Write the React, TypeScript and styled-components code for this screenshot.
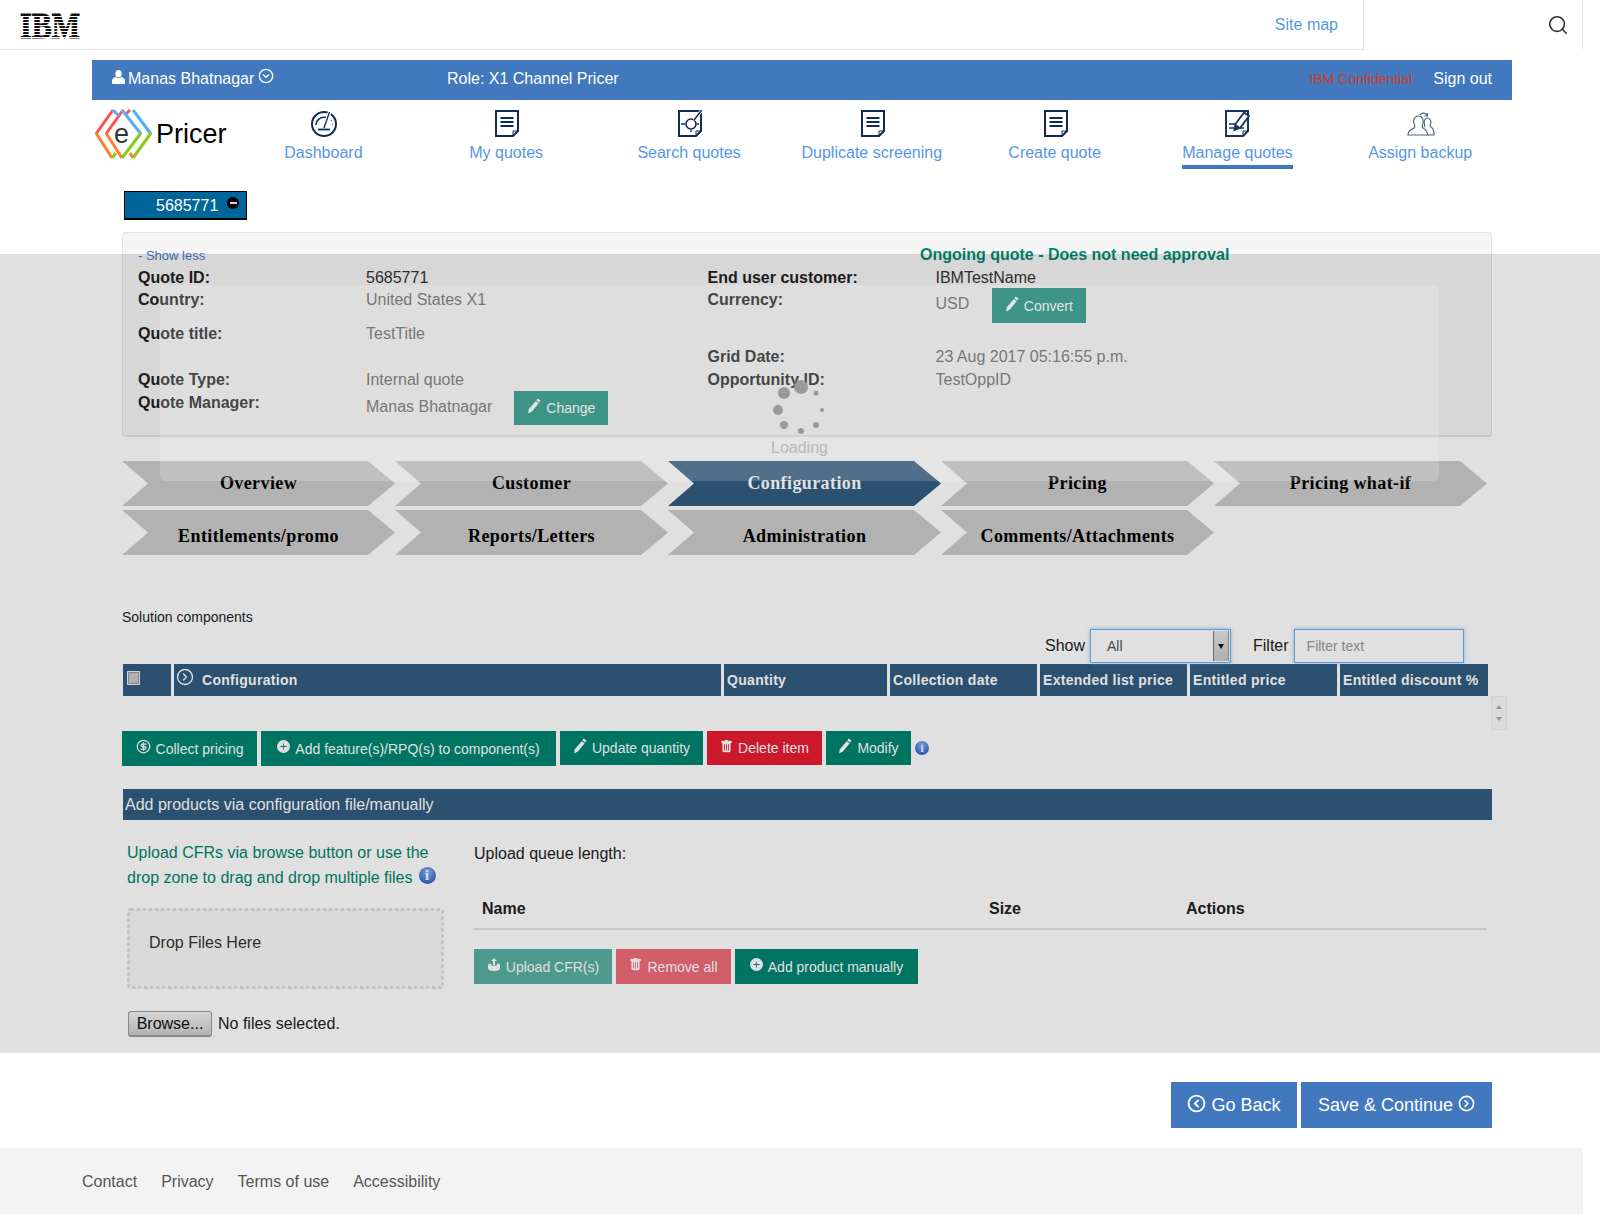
import React from "react";
import styled, { createGlobalStyle } from "styled-components";
import { BsPlusCircleFill, BsTrashFill } from "react-icons/bs";
import { CircleChevronDown, CircleChevronLeft, CircleChevronRight, CircleDollarSign, Search } from "lucide-react";

const GlobalStyle = createGlobalStyle`
  html, body { margin: 0; padding: 0; background: #fff; }
  body { font-family: "Liberation Sans", Arial, sans-serif; font-size: 16px; color: #222; overflow: hidden; }
  * { box-sizing: border-box; }
`;

const navy = "#0f2a55";

const DocBase = () => (
  <>
    <path d="M1 1h22v20l-5 5H1z" fill="none" stroke={navy} strokeWidth="2" />
    <path d="M23 21h-5v5" fill="none" stroke={navy} strokeWidth="1" />
  </>
);

const DocLines = () => (
  <svg width="24" height="27" viewBox="0 0 24 27">
    <DocBase />
    <path d="M5.5 8h13M5.5 12h13M5.5 16h13" stroke={navy} strokeWidth="1.8" />
  </svg>
);

const GaugeIcon = () => (
  <svg width="28" height="27" viewBox="0 0 28 27">
    <circle cx="14" cy="14" r="12" fill="none" stroke={navy} strokeWidth="2" />
    <path d="M6 15a8 8 0 0 1 10-7.5" fill="none" stroke={navy} strokeWidth="1.5" />
    <path d="M14 18L20 1" stroke="#fff" strokeWidth="3.5" />
    <path d="M14 18L19.5 2" stroke={navy} strokeWidth="1.3" />
    <path d="M8 19.5h12" stroke={navy} strokeWidth="1.8" />
    <path d="M21 10l.5 .8M22 14h.8" stroke={navy} strokeWidth="1.2" />
  </svg>
);

const SearchDocIcon = () => (
  <svg width="24" height="27" viewBox="0 0 24 27">
    <DocBase />
    <circle cx="13" cy="14" r="5" fill="#fff" stroke={navy} strokeWidth="1.6" />
    <path d="M16 10L23 1" stroke="#fff" strokeWidth="3" />
    <path d="M16 10L23 1" stroke={navy} strokeWidth="1.5" />
    <path d="M3 14h4M19 14h2M13 20v2" stroke={navy} strokeWidth="1.3" />
  </svg>
);

const ManageIcon = () => (
  <svg width="26" height="27" viewBox="0 0 26 27">
    <path d="M1 1h22v20l-5 5H1z" fill="none" stroke="#17345f" strokeWidth="2" />
    <path d="M23 21h-5v5" fill="none" stroke="#17345f" strokeWidth="1" />
    <path d="M4 14h6M4 18h15" stroke="#17345f" strokeWidth="1.3" />
    <path d="M9.500 20l1-6L19 2.500l5 3.500-8.500 11.500z" fill="#fff" stroke="#17345f" strokeWidth="1.800" />
    <path d="M9.500 20l1-6 5 3.500z" fill="#17345f" />
  </svg>
);

const BackupIcon = () => (
  <svg width="28" height="26" viewBox="0 0 28 26">
    <g fill="none" stroke="#53657f" strokeWidth="1.200">
      <path d="M1 24c0-4 2-5 6-7 1-1 1-2 .5-3-2-3-1-9 4-9 4 0 6 5 4 9-.5 1-.5 2 .5 3 3 1.500 4 3 5 7z" />
      <path d="M17 16c1-1 1-2 .5-3-1-2 0-6 3-6s4 4 3 6c-.5 1-.5 2 .5 3 2 1 3 3 3 8h-6" />
      <path d="M13 4c1-2 4-2.500 6-1l1 1.500M20.500 2v3h-3" />
    </g>
  </svg>
);

const UserGlyph = () => (
  <svg width="13" height="14" viewBox="0 0 13 14" fill="#fff">
    <ellipse cx="6.500" cy="3.800" rx="3.200" ry="3.800" />
    <path d="M0 13v-2.500C0 8.500 2 7.500 3.500 7c1.500 1.500 4.500 1.500 6 0 1.500.5 3.500 1.500 3.500 3.500V13c0 .5-.5 1-1 1H1c-.5 0-1-.5-1-1z" />
  </svg>
);

const PencilGlyph = () => (
  <svg width="14" height="16" viewBox="0 0 14 16" fill="#fff">
    <path d="M10.500 .5l3 2-1.200 1.900-3-2z" />
    <path d="M8.700 3.200l3 2-6.800 8.300L1 15.500l.8-4.200z" />
  </svg>
);

const Page = styled.div`
  position: relative;
  width: 1600px;
  height: 1214px;
  overflow: hidden;
`;

const Frame = styled.div`
  width: 1583px;
`;

const Header = styled.header`
  display: flex;
  height: 50px;
`;

const HeaderMain = styled.div`
  flex: 1;
  display: flex;
  align-items: center;
  justify-content: space-between;
  padding: 1px 25px 0 20px;
  border-bottom: 1px solid #e3e3e3;
  border-right: 1px solid #e3e3e3;
`;

const LogoMark = styled.svg`
  align-self: flex-start;
  margin-top: 1px;
`;

const SiteMap = styled.a`
  color: #5596e6;
  font-size: 16px;
`;

const SearchBox = styled.div`
  width: 219px;
  height: 49px;
  display: flex;
  align-items: center;
  justify-content: flex-end;
  padding: 1px 13px 0 0;
  border-right: 1px solid #e3e3e3;
  color: #333;
`;

const UserBar = styled.div`
  display: flex;
  align-items: center;
  width: 1420px;
  height: 40px;
  margin: 10px 0 0 92px;
  padding: 0 20px 3px;
  background: #4178be;
  color: #fff;
`;

const UserName = styled.div`
  display: flex;
  align-items: center;
  gap: 3px;
  width: 335px;
  svg:first-child { margin-top: -4px; }
  svg:last-child { margin: -5px 0 0 1px; }
`;

const Confidential = styled.span`
  margin: 1px 21px 0 auto;
  font-size: 14px;
  color: #c8402a;
`;

const NavRow = styled.div`
  display: flex;
  height: 91px;
  margin-left: 92px;
`;

const LogoBox = styled.div`
  width: 140px;
  padding: 9px 0 0 3px;
`;

const Nav = styled.nav`
  display: grid;
  grid-template-columns: repeat(7, 182.8px);
  align-content: start;
`;

const NavItem = styled.a<{ $active?: boolean }>`
  display: flex;
  flex-direction: column;
  align-items: center;
  color: #5596e6;
  font-size: 16px;
  line-height: 18px;
  height: 70px;
  padding-top: 9px;
  span {
    margin-top: 7px;
    padding-bottom: 3px;
    border-bottom: 4px solid ${(p) => (p.$active ? "#4178be" : "transparent")};
  }
`;

const NavGlyph = styled.div`
  height: 28px;
  padding-left: 2px;
  display: flex;
  align-items: flex-end;
  justify-content: center;
`;

const Chip = styled.div`
  display: flex;
  align-items: center;
  width: 123px;
  height: 29px;
  margin-left: 124px;
  padding: 1px 0 0 31px;
  background: #006699;
  border: 1px solid #000;
  border-bottom-width: 2px;
  color: #fff;
  font-size: 16px;
`;

const ChipDot = styled.span`
  width: 12px;
  height: 12px;
  margin: -6px 0 0 9px;
  border-radius: 50%;
  background: #000;
  display: flex;
  align-items: center;
  justify-content: center;
  &::after { content: ""; width: 7px; height: 2px; background: #cfd8dc; }
`;

const Content = styled.main`
  width: 1370px;
  margin-left: 122px;
`;

const Panel = styled.section`
  height: 205px;
  margin-top: 12px;
  padding: 12px 15px 0;
  background: #f5f5f5;
  border: 1px solid #e3e3e3;
  border-bottom-width: 2px;
  border-radius: 4px;
`;

const PanelTop = styled.div`
  display: grid;
  grid-template-columns: 782px 1fr;
  height: 22px;
`;

const ShowLess = styled.a`
  font-size: 13px;
  line-height: 21px;
  color: #4178be;
`;

const Status = styled.span`
  font-size: 16px;
  line-height: 20px;
  font-weight: 700;
  color: #008571;
`;

const PanelColumns = styled.div`
  display: grid;
  grid-template-columns: 569.5px 1fr;
`;

const Field = styled.div<{ $h: number }>`
  display: grid;
  grid-template-columns: 228px 1fr;
  height: ${(p) => p.$h}px;
  line-height: 22px;
`;

const Label = styled.span`
  font-weight: 700;
  color: #222;
`;

const Value = styled.span<{ $strong?: boolean }>`
  color: ${(p) => (p.$strong ? "#333" : "#666")};
`;

const ValueRow = styled.div<{ $gap: number }>`
  display: flex;
  align-items: flex-start;
  gap: ${(p) => p.$gap}px;
  margin-top: -1px;
  color: #666;
  & > span { margin-top: 5px; }
`;

const Button = styled.button<{ $tone?: "green" | "red" | "blue"; $faded?: number; $w?: number; $h?: number }>`
  display: inline-flex;
  align-items: center;
  justify-content: center;
  gap: 5px;
  width: ${(p) => (p.$w ? `${p.$w}px` : "auto")};
  height: ${(p) => p.$h || 35}px;
  padding: 0;
  border: 0;
  font-family: inherit;
  font-size: 14px;
  color: #fff;
  white-space: nowrap;
  opacity: ${(p) => p.$faded || 1};
  background: ${(p) => (p.$tone === "red" ? "#e71d32" : p.$tone === "blue" ? "#4178be" : "#008571")};
  svg { margin-top: -4px; flex: none; }
`;

const Steps = styled.div`
  display: grid;
  grid-template-columns: repeat(5, 273px);
  grid-auto-rows: 45px;
  gap: 4px 0;
  margin-top: 24px;
`;

const Step = styled.div<{ $active?: boolean }>`
  display: flex;
  align-items: center;
  justify-content: center;
  clip-path: polygon(0 0, 246px 0, 100% 50%, 246px 100%, 0 100%, 26px 50%);
  background: ${(p) => (p.$active ? "#325c80" : "#cbcbcb")};
  color: ${(p) => (p.$active ? "#fff" : "#000")};
  font-family: "Liberation Serif", "Times New Roman", serif;
  font-size: 18px;
  font-weight: 700;
  letter-spacing: 0.4px;
  &:nth-child(n + 6) { padding-top: 7px; }
`;

const SectionTitle = styled.div`
  margin-top: 52px;
  font-size: 14px;
  line-height: 20px;
`;

const TableControls = styled.div`
  display: flex;
  align-items: center;
  height: 34px;
  margin: 2px 0 1px;
  padding-left: 923px;
`;

const ControlLabel = styled.span`
  margin-right: 5px;
`;

const SelectBox = styled.div`
  position: relative;
  display: flex;
  align-items: center;
  width: 141px;
  height: 34px;
  margin-right: 22px;
  padding-left: 16px;
  font-size: 14px;
  color: #555;
  border: 1px solid #68b0f2;
  box-shadow: 0 0 4px rgba(104, 176, 242, 0.7);
`;

const SelectArrow = styled.span`
  position: absolute;
  top: 1px;
  right: 1px;
  bottom: 1px;
  width: 16px;
  display: flex;
  align-items: center;
  justify-content: center;
  background: linear-gradient(#e4e4e4, #c8c8c8);
  border-left: 1px solid #777;
  border-right: 1px solid #999;
  &::after {
    content: "";
    border: 3px solid transparent;
    border-top: 5px solid #111;
    margin-top: 4px;
  }
`;

const FilterInput = styled.input`
  width: 170px;
  height: 34px;
  padding: 0 12px;
  font-family: inherit;
  font-size: 14px;
  background: transparent;
  border: 1px solid #68b0f2;
  box-shadow: 0 0 4px rgba(104, 176, 242, 0.7);
  &::placeholder { color: #999; opacity: 1; }
`;

const TableHead = styled.div`
  display: grid;
  grid-template-columns: 48px 547px 163px 147px 147px 147px 148px;
  gap: 3px;
  height: 32px;
  margin-left: 1px;
`;

const HeadCell = styled.div`
  display: flex;
  align-items: center;
  padding-left: 3px;
  background: #325c80;
  color: #fff;
  font-size: 14px;
  font-weight: 700;
  letter-spacing: 0.3px;
  white-space: nowrap;
`;

const ConfigCell = styled(HeadCell)`
  padding-left: 2px;
  svg { margin: -6px 8px 0 0; }
`;

const CheckBox = styled.span`
  width: 13px;
  height: 14px;
  margin: -4px 0 0 1px;
  background: #c9c9c9;
  border: 1px solid #eee;
  box-shadow: inset 0 0 0 1px #999;
`;

const TableBody = styled.div`
  display: flex;
  justify-content: flex-end;
  height: 35px;
  margin-right: -15px;
`;

const ScrollBar = styled.div`
  display: flex;
  flex-direction: column;
  align-items: center;
  justify-content: space-around;
  width: 16px;
  height: 34px;
  padding: 4px 0;
  background: #fafafa;
  border: 1px solid #f0f0f0;
`;

const ScrollArrow = styled.span<{ $up?: boolean }>`
  border: 3px solid transparent;
  ${(p) => (p.$up ? "border-bottom: 4px solid #aaa; margin-top: -3px;" : "border-top: 4px solid #aaa; margin-bottom: -3px;")}
`;

const ActionRow = styled.div`
  display: flex;
  align-items: flex-start;
  gap: 4px;
`;

const InfoDot = styled.span<{ $size: number }>`
  display: inline-flex;
  align-items: center;
  justify-content: center;
  width: ${(p) => p.$size}px;
  height: ${(p) => p.$size}px;
  border-radius: 50%;
  background: radial-gradient(circle at 50% 30%, #8fb8f5, #3366cc 75%);
  color: #fff;
  font-family: "Liberation Serif", serif;
  font-size: ${(p) => p.$size - 3}px;
  font-weight: 700;
`;

const ActionInfo = styled(InfoDot)`
  margin: 10px 0 0;
`;

const Band = styled.div`
  height: 31px;
  margin: 23px 0 0 1px;
  padding-left: 2px;
  line-height: 31px;
  background: #325c80;
  color: #fff;
  font-size: 16px;
`;

const UploadGrid = styled.div`
  display: grid;
  grid-template-columns: 352px 1fr;
  margin-top: 21px;
`;

const UploadLeft = styled.div`
  padding-left: 5px;
`;

const UploadHint = styled.p`
  margin: 0;
  width: 316px;
  line-height: 24.5px;
  color: #008571;
  white-space: nowrap;
`;

const HintInfo = styled(InfoDot)`
  margin: 0 0 0 6px;
  vertical-align: 3px;
`;

const DropZone = styled.div`
  width: 317px;
  height: 81px;
  margin-top: 18px;
  padding: 21px 19px;
  line-height: 22px;
  background: #f8f8f8;
  border: 3px dotted #dcdcdc;
  border-radius: 4px;
  color: #333;
`;

const FileRow = styled.div`
  display: flex;
  align-items: center;
  gap: 6px;
  margin-top: 22px;
  padding-left: 1px;
`;

const Browse = styled.button`
  width: 84px;
  height: 26px;
  padding: 0;
  font-family: inherit;
  font-size: 16px;
  color: #111;
  background: linear-gradient(#f4f4f4, #cccccc);
  border: 1px solid #9c9c9c;
  border-bottom-width: 2px;
  border-radius: 3px;
`;

const QueueTitle = styled.div`
  line-height: 25px;
`;

const QueueHead = styled.div`
  display: grid;
  grid-template-columns: 507px 197px 1fr;
  height: 42px;
  margin-top: 22px;
  padding: 10px 0 0 8px;
  width: 1013px;
  border-bottom: 2px solid #e3e3e3;
  font-weight: 700;
  line-height: 22px;
`;

const QueueActions = styled.div`
  display: flex;
  gap: 4px;
  margin-top: 19px;
`;

const Bottom = styled.div`
  display: flex;
  justify-content: flex-end;
  gap: 4px;
  height: 111px;
  padding: 45px 91px 0 0;
`;

const BigButton = styled(Button)`
  height: 46px;
  font-size: 18px;
  svg { margin-top: -4px; }
`;

const Footer = styled.footer`
  display: flex;
  gap: 24px;
  height: 67px;
  padding: 25px 0 0 82px;
  background: #f3f3f3;
  color: #555;
  line-height: 18px;
`;

const Overlay = styled.div`
  position: absolute;
  top: 254px;
  left: 0;
  width: 100%;
  height: 799px;
  background: rgba(0, 0, 0, 0.12);
`;

const LoadingBox = styled.div`
  position: absolute;
  top: 31px;
  left: 160px;
  width: 1279px;
  height: 196px;
  padding-top: 94px;
  display: flex;
  flex-direction: column;
  align-items: center;
  background: rgba(255, 255, 255, 0.18);
  border-radius: 5px;
  color: #b8b8b8;
  line-height: 18px;
`;

const steps = [
  "Overview",
  "Customer",
  "Configuration",
  "Pricing",
  "Pricing what-if",
  "Entitlements/promo",
  "Reports/Letters",
  "Administration",
  "Comments/Attachments",
];

const navItems = [
  { label: "Dashboard", icon: <GaugeIcon /> },
  { label: "My quotes", icon: <DocLines /> },
  { label: "Search quotes", icon: <SearchDocIcon /> },
  { label: "Duplicate screening", icon: <DocLines /> },
  { label: "Create quote", icon: <DocLines /> },
  { label: "Manage quotes", icon: <ManageIcon />, active: true },
  { label: "Assign backup", icon: <BackupIcon /> },
];

const columns = ["Quantity", "Collection date", "Extended list price", "Entitled price", "Entitled discount %"];

const spinnerDots = [
  [31, 8, 7],
  [14, 14, 6],
  [8, 31, 5],
  [14, 46, 4],
  [31, 52, 3],
  [46, 46, 3],
  [52, 31, 2],
  [46, 14, 2.5],
];

const Logo = () => (
  <svg width="135" height="52" viewBox="0 0 135 52">
    <g fill="none" strokeWidth="3">
      <path d="M1 25L18 1M11 25L28 1M31 5L35 1" stroke="#ff5050" />
      <path d="M18 1L24 7M27 1L46 25M38 1L56 25" stroke="#5aaef5" />
      <path d="M1 24L17 49M11 24L27 49M35 44L38 49" stroke="#ff7f2e" />
      <path d="M17 49L21 44M27 49L46 24M38 49L56 24" stroke="#8ccc10" />
    </g>
    <text x="19" y="34" fontFamily="Liberation Sans" fontSize="27" fill="#333">e</text>
    <text x="61" y="34" fontFamily="Liberation Sans" fontSize="27" fill="#000">Pricer</text>
  </svg>
);

const IbmLogo = () => (
  <LogoMark width="62" height="46" viewBox="0 0 62 46">
    <text transform="scale(1 1.2)" x="0" y="30" fontFamily="Liberation Serif" fontSize="30" fontWeight="700" fill="#111" stroke="#111" strokeWidth="0.8">IBM</text>
    {[14, 17, 20, 23, 26, 29, 32, 35].map((y) => (
      <rect key={y} x="0" y={y} width="62" height="1" fill="#fff" />
    ))}
  </LogoMark>
);

const UploadGlyph = () => (
  <svg width="14" height="14" viewBox="0 0 14 14" fill="#fff">
    <path d="M7 0l3 3H8v4H6V3H4z" />
    <path d="M1 7c0-1 1-1.500 3-1.500V7c0 1 6 1 6 0V5.500c2 0 3 .5 3 1.500v3c0 2-2 3-6 3s-6-1-6-3z" />
  </svg>
);

export default function App() {
  return (
    <Page>
      <GlobalStyle />
      <Frame>
        <Header>
          <HeaderMain>
            <IbmLogo />
            <SiteMap>Site map</SiteMap>
          </HeaderMain>
          <SearchBox>
            <Search size={22} strokeWidth={1.800} />
          </SearchBox>
        </Header>

        <UserBar>
          <UserName>
            <UserGlyph />
            Manas Bhatnagar
            <CircleChevronDown size={16} />
          </UserName>
          <span>Role: X1 Channel Pricer</span>
          <Confidential>IBM Confidential</Confidential>
          <span>Sign out</span>
        </UserBar>

        <NavRow>
          <LogoBox>
            <Logo />
          </LogoBox>
          <Nav>
            {navItems.map((item) => (
              <NavItem key={item.label} $active={item.active}>
                <NavGlyph>{item.icon}</NavGlyph>
                <span>{item.label}</span>
              </NavItem>
            ))}
          </Nav>
        </NavRow>

        <Chip>
          5685771
          <ChipDot />
        </Chip>

        <Content>
          <Panel>
            <PanelTop>
              <ShowLess>- Show less</ShowLess>
              <Status>Ongoing quote - Does not need approval</Status>
            </PanelTop>
            <PanelColumns>
              <div>
                <Field $h={22}>
                  <Label>Quote ID:</Label>
                  <Value $strong>5685771</Value>
                </Field>
                <Field $h={34}>
                  <Label>Country:</Label>
                  <Value>United States X1</Value>
                </Field>
                <Field $h={46}>
                  <Label>Quote title:</Label>
                  <Value>TestTitle</Value>
                </Field>
                <Field $h={23}>
                  <Label>Quote Type:</Label>
                  <Value>Internal quote</Value>
                </Field>
                <Field $h={33}>
                  <Label>Quote Manager:</Label>
                  <ValueRow $gap={22}>
                    <span>Manas Bhatnagar</span>
                    <Button $faded={0.9} $w={94} $h={34}>
                      <PencilGlyph />
                      Change
                    </Button>
                  </ValueRow>
                </Field>
              </div>
              <div>
                <Field $h={22}>
                  <Label>End user customer:</Label>
                  <Value $strong>IBMTestName</Value>
                </Field>
                <Field $h={57}>
                  <Label>Currency:</Label>
                  <ValueRow $gap={22.5}>
                    <span>USD</span>
                    <Button $faded={0.9} $w={94} $h={35}>
                      <PencilGlyph />
                      Convert
                    </Button>
                  </ValueRow>
                </Field>
                <Field $h={23}>
                  <Label>Grid Date:</Label>
                  <Value>23 Aug 2017 05:16:55 p.m.</Value>
                </Field>
                <Field $h={23}>
                  <Label>Opportunity ID:</Label>
                  <Value>TestOppID</Value>
                </Field>
              </div>
            </PanelColumns>
          </Panel>

          <Steps>
            {steps.map((step) => (
              <Step key={step} $active={step === "Configuration"}>
                {step}
              </Step>
            ))}
          </Steps>

          <SectionTitle>Solution components</SectionTitle>
          <TableControls>
            <ControlLabel>Show</ControlLabel>
            <SelectBox>
              All
              <SelectArrow />
            </SelectBox>
            <ControlLabel>Filter</ControlLabel>
            <FilterInput placeholder="Filter text" />
          </TableControls>
          <TableHead>
            <HeadCell>
              <CheckBox />
            </HeadCell>
            <ConfigCell>
              <CircleChevronRight size={18} strokeWidth={1.800} />
              Configuration
            </ConfigCell>
            {columns.map((col) => (
              <HeadCell key={col}>{col}</HeadCell>
            ))}
          </TableHead>
          <TableBody>
            <ScrollBar>
              <ScrollArrow $up />
              <ScrollArrow />
            </ScrollBar>
          </TableBody>

          <ActionRow>
            <Button $w={135}>
              <CircleDollarSign size={15} />
              Collect pricing
            </Button>
            <Button $w={295}>
              <BsPlusCircleFill size={13} />
              Add feature(s)/RPQ(s) to component(s)
            </Button>
            <Button $w={143} $h={34}>
              <PencilGlyph />
              Update quantity
            </Button>
            <Button $w={115} $h={34} $tone="red">
              <BsTrashFill size={13} />
              Delete item
            </Button>
            <Button $w={85} $h={34}>
              <PencilGlyph />
              Modify
            </Button>
            <ActionInfo $size={14}>i</ActionInfo>
          </ActionRow>

          <Band>Add products via configuration file/manually</Band>

          <UploadGrid>
            <UploadLeft>
              <UploadHint>
                Upload CFRs via browse button or use the
                <br />
                drop zone to drag and drop multiple files
                <HintInfo $size={17}>i</HintInfo>
              </UploadHint>
              <DropZone>Drop Files Here</DropZone>
              <FileRow>
                <Browse>Browse...</Browse>
                No files selected.
              </FileRow>
            </UploadLeft>
            <div>
              <QueueTitle>Upload queue length:</QueueTitle>
              <QueueHead>
                <span>Name</span>
                <span>Size</span>
                <span>Actions</span>
              </QueueHead>
              <QueueActions>
                <Button $w={138} $faded={0.65}>
                  <UploadGlyph />
                  Upload CFR(s)
                </Button>
                <Button $w={115} $tone="red" $faded={0.65}>
                  <BsTrashFill size={13} />
                  Remove all
                </Button>
                <Button $w={183}>
                  <BsPlusCircleFill size={13} />
                  Add product manually
                </Button>
              </QueueActions>
            </div>
          </UploadGrid>
        </Content>

        <Bottom>
          <BigButton $tone="blue" $w={126}>
            <CircleChevronLeft size={19} strokeWidth={2.400} />
            Go Back
          </BigButton>
          <BigButton $tone="blue" $w={191}>
            Save &amp; Continue
            <CircleChevronRight size={17} strokeWidth={2.400} />
          </BigButton>
        </Bottom>
        <Footer>
          <span>Contact</span>
          <span>Privacy</span>
          <span>Terms of use</span>
          <span>Accessibility</span>
        </Footer>
      </Frame>

      <Overlay>
        <LoadingBox>
          <svg width="60" height="60" viewBox="0 0 60 60">
            {spinnerDots.map(([cx, cy, r]) => (
              <circle key={`${cx}-${cy}`} cx={cx} cy={cy} r={r} fill="#9a9a9a" />
            ))}
          </svg>
          Loading
        </LoadingBox>
      </Overlay>
    </Page>
  );
}
